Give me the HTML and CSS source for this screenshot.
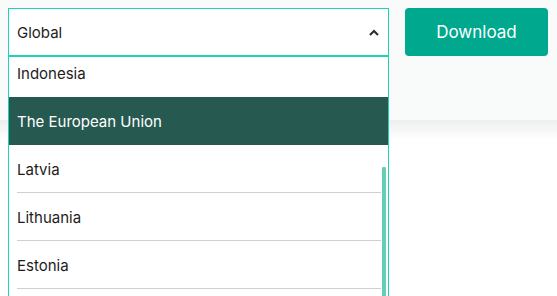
FILE: index.html
```html
<!DOCTYPE html>
<html lang="en">
<head>
    <meta charset="UTF-8">
    <meta name="viewport" content="width=device-width, initial-scale=1.0">
    <title>Download</title>
    <link rel="stylesheet" href="styles.css">
</head>
<body>
    <div class="panel">
        <div class="select">
            <div class="select-head">
                <span>Global</span>
                <svg class="chevron" width="10" height="7" viewBox="0 0 10 7">
                    <polyline points="1,6 5,2 9,6" fill="none" stroke="#2b2b2b" stroke-width="2"/>
                </svg>
            </div>
            <div class="select-list">
                <div class="item first">Indonesia</div>
                <div class="item active">The European Union</div>
                <div class="item">Latvia</div>
                <div class="item">Lithuania</div>
                <div class="item">Estonia</div>
                <div class="scrollbar"></div>
            </div>
        </div>
        <button class="btn">Download</button>
    </div>
    <div class="panel-shadow"></div>
</body>
</html>
```

FILE: styles.css
```css
html, body {
    height: 100%;
}
body {
    font-family: 'Inter', 'Noto Sans', sans-serif;
    color: #1d1d1b;
    background-color: #fff;
    margin: 0;
    padding: 0;
    min-height: 296px;
}
.panel {
    background-color: #f9fbfb;
    height: 120px;
    box-sizing: border-box;
    padding: 8px;
    display: flex;
    align-items: flex-start;
    gap: 16px;
}
.panel-shadow {
    height: 20px;
    background: linear-gradient(#eeeeee, #ffffff);
}
.select {
    position: relative;
    width: 381px;
    z-index: 2;
}
.select-head {
    height: 48px;
    box-sizing: border-box;
    border: 1px solid #1ed3b2;
    background-color: #fff;
    padding: 0 9px 0 8px;
    display: flex;
    align-items: center;
    justify-content: space-between;
    font-size: 15px;
}
.chevron {
    margin-top: 1px;
}
.select-list {
    position: absolute;
    top: 48px;
    left: 0;
    width: 381px;
    height: 240px;
    box-sizing: border-box;
    border: 1px solid #1ed3b2;
    border-bottom: none;
    background-color: #fff;
    overflow: hidden;
}
.item {
    position: relative;
    height: 48px;
    padding: 0 8px;
    display: flex;
    align-items: center;
    font-size: 15px;
}
.item::after {
    content: "";
    position: absolute;
    left: 8px;
    right: 7px;
    bottom: 0;
    height: 1px;
    background-color: #cfcfcf;
}
.item.first {
    margin-top: -8px;
}
.item.first::after,
.item.active::after {
    display: none;
}
.item.active {
    background-color: #265a50;
    color: #fff;
}
.scrollbar {
    position: absolute;
    right: 2px;
    top: 110px;
    bottom: 0;
    width: 4px;
    background-color: #66cdb9;
    border-radius: 1px 1px 0 0;
}
.btn {
    width: 143px;
    height: 48px;
    border: none;
    border-radius: 4px;
    background-color: #00a88e;
    color: #fff;
    font-family: inherit;
    font-size: 17px;
    cursor: pointer;
}
```
